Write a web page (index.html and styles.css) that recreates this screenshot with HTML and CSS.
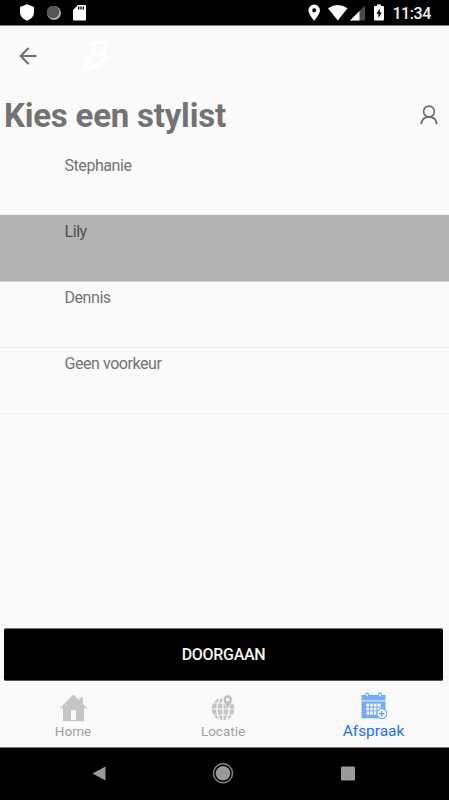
FILE: index.html
```html
<!DOCTYPE html>
<html lang="nl">
<head>
<meta charset="utf-8">
<title>Kies een stylist</title>
<link rel="stylesheet" href="styles.css">
</head>
<body>
<div class="screen">
  <header class="status">
    <svg class="status-left" width="100" height="25" viewBox="0 0 100 25">
      <path fill="#fff" d="M27 4.300l7 2.800v5.200c0 4-3 7.100-7 8.400-4-1.300-7-4.400-7-8.400V7.100z"/>
      <circle cx="54" cy="13" r="7" fill="#aaa"/>
      <circle cx="53" cy="12" r="6.200" fill="#555"/>
      <path fill="#fff" d="M78 5h7q1 0 1 1v13.500q0 1-1 1H74q-1 0-1-1V10z"/>
      <path stroke="#000" stroke-width="1.300" d="M78.700 6.500v3M81 6.500v3M83.300 6.500v3"/>
    </svg>
    <div class="status-right">
      <svg width="80" height="25" viewBox="0 0 80 25">
        <path fill="#fff" fill-rule="evenodd" d="M6.200 4.500a5.800 5.800 0 0 1 5.800 5.800c0 4-5.800 10.500-5.800 10.500S.4 14.300.4 10.300a5.800 5.800 0 0 1 5.800-5.800zm0 3.700a2 2 0 1 0 0 4 2 2 0 0 0 0-4z"/>
        <path fill="#fff" d="M20 8.200Q29.800 1.800 39.500 8.200L29.800 20.500z"/>
        <path fill="#4a4a4a" d="M57 5.500v15H42z"/>
        <path fill="#fff" d="M51.500 11v9.500H42z"/>
        <path fill="#fff" d="M69 4.500h4V6h2q1 0 1 1v12.500q0 1-1 1h-8q-1 0-1-1V7q0-1 1-1h2z"/>
        <path fill="#000" d="M71.800 8.500l-3.300 5.300h2v4.200l3.200-5.500h-1.900z"/>
      </svg>
      <span class="clock">11:34</span>
    </div>
  </header>
  <div class="toolbar">
    <svg width="18" height="18" viewBox="0 0 18 18" fill="none" stroke="#6e6e6e" stroke-width="2"><path d="M17.500 9H2M9.600 1L1.600 9l8 8"/></svg>
    <svg class="brand" width="30" height="36" viewBox="0 0 30 36" fill="none" stroke="#fff" stroke-width="3.600" stroke-linecap="round" stroke-linejoin="round"><path d="M14 5C12 14 8 24 2.500 32M10 6q16-4 16 1-1 7-14 9.500Q27 14 24 20 19 28 2 32"/></svg>
  </div>
  <div class="heading">
    <h1><span>Kies een stylist</span></h1>
    <svg width="18" height="21" viewBox="0 0 18 21" fill="none" stroke="#6b6b6b" stroke-width="1.600"><circle cx="9" cy="6.500" r="5.400"/><path d="M1.200 19.300C1.600 14.500 4.500 11.900 9 11.900s7.400 2.600 7.800 7.400"/></svg>
  </div>
  <ul class="list">
    <li><span>Stephanie</span></li>
    <li class="selected"><span>Lily</span></li>
    <li><span>Dennis</span></li>
    <li><span>Geen voorkeur</span></li>
  </ul>
  <button class="continue"><span>DOORGAAN</span></button>
  <nav class="tabs">
    <div class="tab home">
      <svg width="28" height="28" viewBox="0 0 28 28"><path fill="#c6c6c6" fill-rule="evenodd" d="M13.500 .5L0 13.900l1 1 2-1.200v13.500h21V13.700l2 1.200 1-1-4-4V3.600h-3.500V6.500zM11 16.200h5V26h-5z"/></svg>
      <span>Home</span>
    </div>
    <div class="tab location">
      <svg width="28" height="28" viewBox="0 0 28 28">
        <circle cx="14" cy="15" r="11.300" fill="#c4c4c4"/>
        <path fill="none" stroke="#fafafa" stroke-width="1.200" d="M2 15h24M3.500 9h21M3.500 21h21M14 3v25M11.500 4Q4 15 11.500 27M16.500 4Q24 15 16.500 27"/>
        <path fill="#bebebe" stroke="#fafafa" d="M18.800 .8a4.700 4.700 0 0 1 4.700 4.700c0 3-4.700 9-4.700 9s-4.700-6-4.700-9A4.700 4.700 0 0 1 18.800 .8z"/>
        <circle cx="18.800" cy="5.500" r="1.900" fill="#fafafa"/>
      </svg>
      <span>Locatie</span>
    </div>
    <div class="tab appointment">
      <svg width="28" height="28" viewBox="0 0 28 28">
        <path fill="#72a8ff" d="M1.500 3h24v5h-24zM1.500 9.200h24v17h-24z"/>
        <path fill="#b9d4ff" d="M1.500 7.800h24v1.800h-24z"/>
        <g fill="#fafafa" stroke="#72a8ff" stroke-width="1.200"><rect x="5.800" y="1.100" width="2.800" height="4" rx="1.400"/><rect x="18.600" y="1.100" width="2.800" height="4" rx="1.400"/></g>
        <path fill="#fafafa" d="M6.300 11.700h14.500v11H6.300z"/>
        <path fill="none" stroke="#72a8ff" d="M9.600 11.500V23M13.300 11.500V23M17 11.500V23M6 15.100h15M6 18.900h15"/>
        <circle cx="21.800" cy="21.700" r="4.900" fill="#fafafa" stroke="#72a8ff" stroke-width="1.100"/>
        <path stroke="#5795ff" stroke-width="1.200" d="M19 21.700h5.600M21.800 18.900v5.600"/>
      </svg>
      <span>Afspraak</span>
    </div>
  </nav>
  <footer class="navbar">
    <svg width="14" height="16" viewBox="0 0 14 16"><path fill="#999" d="M13.500 .5v14L.5 7.500z"/></svg>
    <svg width="22" height="22" viewBox="0 0 22 22"><circle cx="11" cy="10.300" r="7.300" fill="#999"/><circle cx="11" cy="10.300" r="9.500" fill="none" stroke="#858585" stroke-width="1.500"/></svg>
    <svg width="16" height="16" viewBox="0 0 16 16"><rect x="1" y=".5" width="14" height="14" rx="1" fill="#999"/></svg>
  </footer>
</div>
</body>
</html>
```
FILE: styles.css
```css
* { box-sizing: border-box; }
body { margin: 0; font-family: Roboto, sans-serif; background: #fafafa; color: #737373; }
svg { display: block; flex: none; }
.screen { width: 449px; height: 800px; display: flex; flex-direction: column; overflow: hidden; }
.status { height: 26px; flex: none; background: #000; border-bottom: 1px solid #7c7c7c; display: flex; justify-content: space-between; }
.status-right { display: flex; padding-right: 18px; gap: 4px; }
.clock { color: #f2f2f2; font-size: 16px; line-height: 27px; font-weight: 500; letter-spacing: -0.4px; }
.toolbar { height: 62px; flex: none; display: flex; align-items: center; padding: 0 0 2px 19px; }
.brand { margin-left: 44px; }
.heading { height: 61px; flex: none; display: flex; align-items: center; justify-content: space-between; padding: 0 11px 6px 4px; }
h1 { margin: 0; font-size: 33px; line-height: 40px; font-weight: 700; letter-spacing: -0.22px; white-space: nowrap; padding-top: 1px; }
.list { list-style: none; margin: 0; padding: 0; flex: 1; }
.list li { height: 66.300px; padding: 7px 0 0 64.500px; font-size: 16px; line-height: 19px; letter-spacing: -0.44px; border-bottom: 1px solid #efefef; }
.list .selected { background: #b3b3b3; color: #4f4f4f; border-color: #d0d0d0; }
.list .selected ~ li { padding-top: 6.500px; }
.continue { height: 53px; flex: none; margin: 0 6px 0 4px; padding: 0; border: 0; border-top: 1px solid #777; border-bottom: 1px solid #555; border-radius: 2px; background: #000; color: #f5f5f5; font: 500 16px/51px Roboto, sans-serif; letter-spacing: -0.3px; }
.tabs { height: 66px; flex: none; display: grid; grid-template-columns: 146px 154px 149px; padding-top: 11px; }
.tab { display: flex; flex-direction: column; align-items: center; font-size: 13.500px; line-height: 18px; color: #a0a0a0; }
.home svg, .location svg { margin-top: 2px; }
.home svg { margin-left: 2px; }
.appointment { font-size: 15.500px; color: #1a6eff; gap: 2px; letter-spacing: -0.05px; padding-right: 2px; }
.navbar { height: 53px; flex: none; background: #000; border-top: 1px solid #777; display: flex; align-items: center; padding-left: 92px; gap: 106px; }
```
